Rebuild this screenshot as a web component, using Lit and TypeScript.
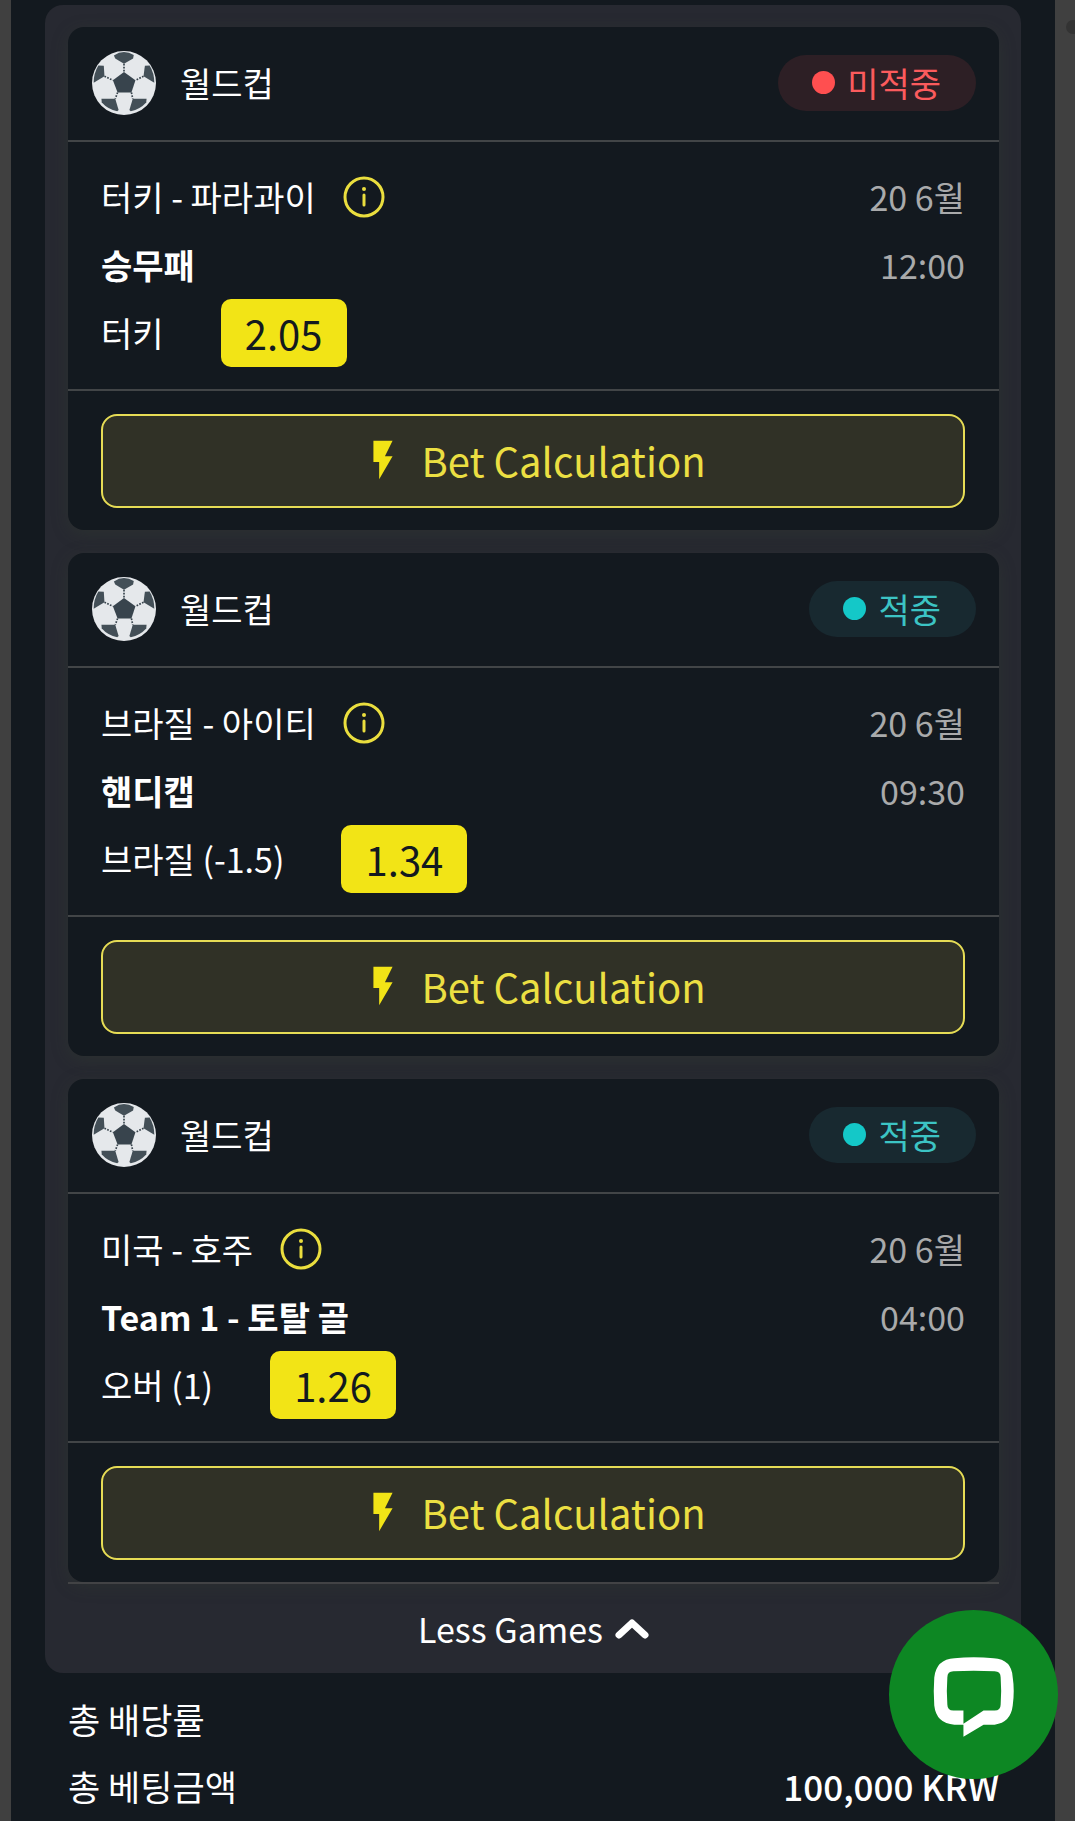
import { LitElement, html, css, svg } from "lit";
import { customElement, property } from "lit/decorators.js";
import { classMap } from "lit/directives/class-map.js";

interface Bet {
  league: string;
  won: boolean;
  status: string;
  match: string;
  market: string;
  pick: string;
  odds: string;
  date: string;
  time: string;
}

const BETS: Bet[] = [
  { league: "월드컵", won: false, status: "미적중", match: "터키 - 파라과이", market: "승무패", pick: "터키", odds: "2.05", date: "20 6월", time: "12:00" },
  { league: "월드컵", won: true, status: "적중", match: "브라질 - 아이티", market: "핸디캡", pick: "브라질 (-1.5)", odds: "1.34", date: "20 6월", time: "09:30" },
  { league: "월드컵", won: true, status: "적중", match: "미국 - 호주", market: "Team 1 - 토탈 골", pick: "오버 (1)", odds: "1.26", date: "20 6월", time: "04:00" },
];

const ballPatches = svg`
  <g fill="#434f57">
    <path d="M163 106Q178 96 193 96Q208 96 222 105L220 115L193 131L167 115Z"/>
    <path d="M117 136L133 137L135 168L103 187Q103 158 117 136Z"/>
    <path d="M269 136L255 137L251 168L283 187Q283 158 269 136Z"/>
    <path d="M126 235H167L177 268L173 272Q145 266 127 246Z"/>
    <path d="M260 235H219L209 268L213 272Q241 266 259 246Z"/>
  </g>
  <path fill="#38444d" d="M193 155L227 180L215 216H174L160 180Z"/>
  <path fill="none" stroke="#38444d" stroke-width="5" stroke-dasharray="5 4"
    d="M193 131V155M135 168L160 180M251 168L227 180M174 216L167 235M215 216L219 235"/>`;

const soccerBall = html`<svg class="ball" viewBox="98 93 190 190" aria-hidden="true">
  <circle cx="193" cy="188" r="95" fill="#e5e8eb"/>${ballPatches}</svg>`;

const infoIcon = html`<svg class="info-icon" viewBox="0 0 42 42" aria-hidden="true">
  <circle cx="21" cy="21" r="19" fill="none" stroke="currentColor" stroke-width="3"/>
  <circle cx="21" cy="13" r="2" fill="currentColor"/>
  <path d="M21 19V29" stroke="currentColor" stroke-width="3" stroke-linecap="round"/></svg>`;

const boltIcon = html`<svg class="bolt" viewBox="0 0 24 24" aria-hidden="true">
  <path fill="#f2e416" d="M7 2v11h3v9l7-12h-4l4-8z"/></svg>`;

const chevronUp = html`<svg class="chevron" viewBox="0 0 34 22" aria-hidden="true">
  <path d="M4 17L17 5L30 17" fill="none" stroke="currentColor" stroke-width="7" stroke-linecap="round" stroke-linejoin="round"/></svg>`;

const chatIcon = html`<svg class="chat-icon" viewBox="0 0 168 168" aria-hidden="true">
  <path fill="#fff" fill-rule="evenodd" d="M65 48Q84 46 104 48Q122 49 123 67Q125 80 123 95Q121 112 105 114H94L74 126V114H65Q47 113 45 95Q44 80 45 67Q47 49 65 48Z
    M64 61Q58 61 58 67Q57 80 58 94Q58 100 64 100H74V113L94 100H105Q111 100 111 94Q112 80 111 67Q111 61 105 61Q84 60 64 61Z"/></svg>`;

@customElement("bet-card")
export class BetCard extends LitElement {
  @property({ attribute: false }) bet!: Bet;

  static styles = css`
    :host { display: block; }
    * { box-sizing: border-box; }
    .card {
      background: #13191f;
      border-radius: 16px;
      box-shadow: 0 4px 16px rgba(52, 62, 50, 0.35);
    }
    .head {
      display: flex;
      align-items: center;
      gap: 24px;
      height: 115px;
      padding: 0 23px 2px 24px;
      border-bottom: 2px solid #424547;
    }
    .ball { width: 64px; height: 64px; flex: none; }
    .league { flex: 1; margin: 0; font-size: 34px; font-weight: 400; }
    .pill {
      display: flex;
      align-items: center;
      gap: 12px;
      height: 56px;
      padding: 0 35px 0 34px;
      border-radius: 28px;
      line-height: 56px;
      background: #2d1f25;
      color: #fb5b5d;
    }
    .pill.won { background: #182930; color: #3cc4c4; }
    .dot { width: 23px; height: 23px; border-radius: 50%; background: #ff4f50; }
    .won .dot { background: #14c8c8; }
    .body {
      padding: 21px 34px 22px 33px;
      border-bottom: 2px solid #424547;
    }
    .row {
      display: flex;
      align-items: center;
      height: 68px;
      line-height: 68px;
    }
    .market { font-weight: 700; }
    .when { margin-left: auto; color: #a9aaab; }
    .info {
      display: flex;
      margin: 0 0 0 27px;
      padding: 0;
      border: 0;
      background: none;
      color: #eade3e;
      cursor: pointer;
    }
    .info-icon { width: 42px; height: 42px; }
    .odds {
      margin-left: 57px;
      min-width: 126px;
      padding: 0 22px;
      border-radius: 10px;
      background: #f2e416;
      color: #13191f;
      font-size: 40px;
      text-align: center;
    }
    .foot { padding: 23px 34px 22px 33px; }
    .calc {
      display: flex;
      align-items: center;
      justify-content: center;
      gap: 15px;
      width: 100%;
      height: 94px;
      padding: 0 0 2px;
      border: 2px solid #e6dc55;
      border-radius: 16px;
      background: #303126;
      color: #ebdf42;
      font: inherit;
      font-size: 40px;
      cursor: pointer;
    }
    .bolt { width: 46px; height: 46px; }
  `;

  render() {
    const b = this.bet;
    return html`<article class="card">
      <header class="head">
        ${soccerBall}
        <h2 class="league">${b.league}</h2>
        <span class=${classMap({ pill: true, won: b.won })}><span class="dot"></span>${b.status}</span>
      </header>
      <div class="body">
        <div class="row">
          <span>${b.match}</span>
          <button class="info" type="button" aria-label="경기 정보">${infoIcon}</button>
          <span class="when">${b.date}</span>
        </div>
        <div class="row">
          <span class="market">${b.market}</span>
          <span class="when">${b.time}</span>
        </div>
        <div class="row">
          <span>${b.pick}</span>
          <span class="odds">${b.odds}</span>
        </div>
      </div>
      <div class="foot">
        <button class="calc" type="button">${boltIcon}<span>Bet Calculation</span></button>
      </div>
    </article>`;
  }
}

@customElement("app-root")
export class AppRoot extends LitElement {
  static styles = css`
    :host {
      display: block;
      min-height: 100vh;
      padding: 0 20px 0 11px;
      box-sizing: border-box;
      position: relative;
      overflow: hidden;
      background: #404040;
      color: #fff;
      font-family: "Noto Sans CJK KR", "Noto Sans", sans-serif;
      font-size: 34px;
    }
    * { box-sizing: border-box; }
    .slip {
      min-height: 100vh;
      padding: 5px 34px 0;
      background: #13191f;
    }
    .games {
      display: flex;
      flex-direction: column;
      padding: 22px 22px 0 23px;
      border-radius: 18px;
      background: #272931;
    }
    .list { display: grid; gap: 23px; }
    .less {
      display: flex;
      align-items: center;
      justify-content: center;
      gap: 12px;
      height: 91px;
      padding: 0;
      border: 0;
      border-top: 2px solid #424345;
      background: none;
      color: inherit;
      font: inherit;
      cursor: pointer;
    }
    .chevron { width: 34px; height: 22px; }
    .totals { margin: 0; padding: 12px 22px 0 23px; }
    .total {
      display: flex;
      justify-content: space-between;
      height: 68px;
      line-height: 68px;
    }
    .total:last-child { height: auto; line-height: 66px; }
    .term { font-size: 35px; }
    .value { margin: 0; font-size: 35px; font-weight: 500; }
    .thumb {
      position: absolute;
      top: 20px;
      right: -5px;
      width: 14px;
      height: 14px;
      border-radius: 50%;
      background: #333;
    }
    .chat {
      position: fixed;
      right: 17px;
      bottom: 42px;
      width: 169px;
      height: 169px;
      padding: 0;
      border: 0;
      border-radius: 50%;
      background: #0d8723;
      cursor: pointer;
    }
    .chat-icon { display: block; width: 100%; height: 100%; }
  `;

  render() {
    return html`
      <main class="slip">
        <section class="games">
          <div class="list">${BETS.map((bet) => html`<bet-card .bet=${bet}></bet-card>`)}</div>
          <button class="less" type="button"><span>Less Games</span>${chevronUp}</button>
        </section>
        <dl class="totals">
          <div class="total"><dt class="term">총 배당률</dt><dd class="value"></dd></div>
          <div class="total"><dt class="term">총 베팅금액</dt><dd class="value">100,000 KRW</dd></div>
        </dl>
      </main>
      <span class="thumb"></span>
      <button class="chat" type="button" aria-label="채팅">${chatIcon}</button>
    `;
  }
}
